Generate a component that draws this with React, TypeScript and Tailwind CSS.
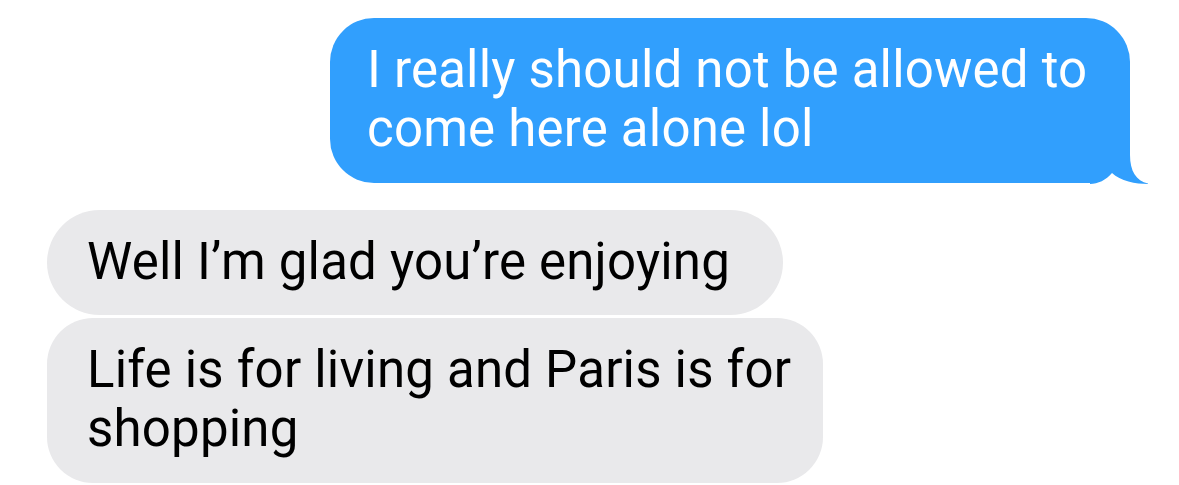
export default function App() {
  return (
    <div
      className="w-[1179px] h-[485px] bg-white flex flex-col overflow-hidden"
      style={{ fontFamily: "Roboto, 'Liberation Sans', sans-serif" }}
    >
      <div className="self-end mr-[49px] mt-[18px] relative w-[800px] h-[165px] bg-[#319ffd] rounded-[44px] rounded-br-none pl-[37px] pt-[22px] text-white text-[51px] leading-[59px] tracking-[0.2px]">
        I really should not be allowed to
        <br />
        come here alone lol
        <svg
          className="absolute left-[760px] top-[125px]"
          width="60"
          height="41"
          viewBox="0 0 60 41"
        >
          <rect x="0" y="0" width="60" height="41" fill="#ffffff" />
          <path
            d="M0 0 L40 0 L40 12 C40 28 46 38 58 40.5 L58 41 C46 41 30 38 22 30 C16 37 8 41 0 41 Z"
            fill="#319ffd"
          />
        </svg>
      </div>
      <div className="ml-[47px] mt-[27px] w-[736px] h-[105px] bg-[#e9e9eb] rounded-full pl-[40px] pt-[22px] text-black text-[51px] leading-[59px] tracking-[0.2px]">
        Well I’m glad you’re enjoying
      </div>
      <div className="ml-[47px] mt-[3px] w-[776px] h-[165px] bg-[#e9e9eb] rounded-[46px] pl-[40px] pt-[22px] text-black text-[51px] leading-[59px] tracking-[0.2px]">
        Life is for living and Paris is for
        <br />
        shopping
      </div>
    </div>
  );
}
